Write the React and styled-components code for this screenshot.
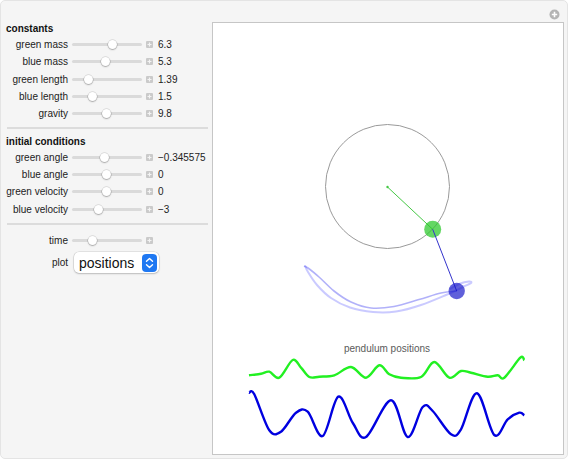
import styled, { createGlobalStyle } from "styled-components";

const GlobalStyle = createGlobalStyle`
  html, body {
    margin: 0;
    padding: 0;
    background: #ffffff;
  }
  body {
    font-family: "Liberation Sans", Arial, sans-serif;
  }
`;

const constants = [
  { label: "green mass", value: "6.3", pos: 40 },
  { label: "blue mass", value: "5.3", pos: 33 },
  { label: "green length", value: "1.39", pos: 16 },
  { label: "blue length", value: "1.5", pos: 20 },
  { label: "gravity", value: "9.8", pos: 34 },
];

const initial = [
  { label: "green angle", value: "\u22120.345575", pos: 32 },
  { label: "blue angle", value: "0", pos: 34 },
  { label: "green velocity", value: "0", pos: 34 },
  { label: "blue velocity", value: "\u22123", pos: 26 },
];

const greenWave = [
  [248, 374.3], [260, 372.7], [268.3, 370.7], [278.3, 376.7], [291.7, 359],
  [300, 366.7], [308.3, 376], [318.3, 375.7], [333.3, 374.3], [350, 366],
  [365, 376.7], [378.3, 364.3], [388.3, 373.3], [400, 376.7], [420, 376],
  [433.3, 361], [448.3, 376.7], [460, 370], [470, 371.7], [486.7, 375.7],
  [496.7, 374.3], [503.3, 376.7], [519.3, 356.7], [523.3, 359.3],
];

const blueWave = [
  [248, 391.7], [253.3, 393.3], [268.3, 429.3], [280, 430.7], [295, 411.7],
  [306.7, 410.7], [321.7, 435], [337.3, 395.7], [351.7, 421.7], [365, 436],
  [390, 399.3], [406.7, 436], [421.7, 406], [431.7, 410], [450, 433.3],
  [460, 428.3], [476, 392.3], [493.3, 434], [506.7, 418.3], [518.3, 411.7],
  [523.3, 414.3],
];

const fmt = (p) => `${p[0].toFixed(1)},${p[1].toFixed(1)}`;

const smooth = (pts) => {
  let d = `M${fmt(pts[0])}`;
  for (let i = 0; i < pts.length - 1; i++) {
    const p0 = pts[i - 1] || pts[i];
    const p1 = pts[i];
    const p2 = pts[i + 1];
    const p3 = pts[i + 2] || p2;
    const c1 = [p1[0] + (p2[0] - p0[0]) / 6, p1[1] + (p2[1] - p0[1]) / 6];
    const c2 = [p2[0] - (p3[0] - p1[0]) / 6, p2[1] - (p3[1] - p1[1]) / 6];
    d += ` C${fmt(c1)} ${fmt(c2)} ${fmt(p2)}`;
  }
  return d;
};

// trajectory of the blue bob (two passes of the loop)
const outerTrail = [
  [304, 264.5], [307, 271], [316, 284], [330, 297], [349, 306.5], [372, 311],
  [395, 310.5], [420, 304], [445, 294], [462, 286], [470, 282], [468, 280.5],
  [458, 283], [449, 288],
];
const innerTrail = [
  [303, 265], [307, 267], [318, 276], [333, 290], [350, 301], [370, 307],
  [393, 305.5], [418, 298.5], [440, 292], [456, 290],
];

const PlusBox = () => (
  <PlusWrap viewBox="0 0 7 7">
    <rect x="0" y="0" width="7" height="7" rx="1" fill="#cacaca" />
    <path d="M3.5 1.5v4M1.5 3.5h4" stroke="#f4f4f4" strokeWidth="1.2" />
  </PlusWrap>
);

const Slider = ({ pos }) => (
  <Track>
    <Thumb $pos={pos} />
  </Track>
);

const ControlRow = ({ label, value, pos }) => (
  <Row>
    <Label>{label}</Label>
    <Slider pos={pos} />
    <PlusBox />
    <Value>{value}</Value>
  </Row>
);

export default function App() {
  return (
    <>
      <GlobalStyle />
      <Panel>
        <Controls>
          <Heading>constants</Heading>
          {constants.map((c) => (
            <ControlRow key={c.label} {...c} />
          ))}
          <Divider />
          <Heading>initial conditions</Heading>
          {initial.map((c) => (
            <ControlRow key={c.label} {...c} />
          ))}
          <Divider />
          <Row $top={2}>
            <Label>time</Label>
            <Slider pos={20} />
            <PlusBox />
          </Row>
          <PlotRow>
            <Label>plot</Label>
            <Popup>
              <span>positions</span>
              <Stepper viewBox="0 0 15 18">
                <rect width="15" height="18" rx="4" fill="#1f78f2" />
                <path
                  d="M4.5 7.2L7.5 4.4L10.5 7.2M4.5 10.8L7.5 13.6L10.5 10.8"
                  fill="none"
                  stroke="#fff"
                  strokeWidth="1.4"
                  strokeLinecap="round"
                  strokeLinejoin="round"
                />
              </Stepper>
            </Popup>
          </PlotRow>
        </Controls>
        <Stage>
          <TopBar>
            <CornerIcon viewBox="0 0 11 11">
              <circle cx="5.5" cy="5.5" r="5" fill="#b4b4b4" />
              <path d="M5.5 2.8v5.4M2.8 5.5h5.4" stroke="#fff" strokeWidth="1.6" />
            </CornerIcon>
          </TopBar>
          <PlotBox>
            <svg width="350" height="431" viewBox="212 22 350 431">
              <circle cx="386.5" cy="185.5" r="62" fill="none" stroke="#9a9a9a" strokeWidth="1" />
              <path d={smooth(outerTrail)} fill="none" stroke="rgba(90,90,255,0.32)" strokeWidth="2" />
              <path d={smooth(innerTrail)} fill="none" stroke="rgba(70,70,240,0.42)" strokeWidth="1.6" />
              <line x1="386.5" y1="186" x2="431.7" y2="228.3" stroke="#45c845" strokeWidth="1" />
              <circle cx="386.5" cy="186" r="1.2" fill="#45c845" />
              <circle cx="431.7" cy="228.3" r="8.5" fill="rgba(40,200,40,0.72)" />
              <line x1="431.7" y1="228.3" x2="455.7" y2="290" stroke="#3434cc" strokeWidth="1" />
              <circle cx="455.7" cy="290" r="8.2" fill="rgba(20,20,200,0.68)" />
              <text
                x="386"
                y="350.5"
                textAnchor="middle"
                fontFamily="Liberation Sans, Arial, sans-serif"
                fontSize="10"
                fill="#5a5a5a"
              >
                pendulum positions
              </text>
              <path d={smooth(greenWave)} fill="none" stroke="#22f022" strokeWidth="2.4" />
              <path d={smooth(blueWave)} fill="none" stroke="#0000e0" strokeWidth="2.4" />
            </svg>
          </PlotBox>
        </Stage>
      </Panel>
    </>
  );
}

const Panel = styled.div`
  box-sizing: border-box;
  width: 568px;
  height: 459px;
  background: #f5f5f5;
  border: 1px solid #e4e4e4;
  border-radius: 5px;
  display: flex;
  align-items: flex-start;
`;

const Controls = styled.div`
  box-sizing: border-box;
  width: 211px;
  padding: 21px 4px 0 5px;
  display: flex;
  flex-direction: column;
`;

const Heading = styled.div`
  font-size: 10px;
  font-weight: bold;
  color: #111;
  height: 14px;
  line-height: 14px;
`;

const Row = styled.div`
  display: grid;
  grid-template-columns: 62px 70px 7px auto;
  column-gap: 4px;
  align-items: center;
  height: 17.25px;
  margin-top: ${({ $top }) => $top || 0}px;
`;

const Label = styled.span`
  font-size: 10px;
  color: #222;
  text-align: right;
  white-space: nowrap;
`;

const Value = styled.span`
  font-size: 10px;
  color: #222;
  margin-left: 1px;
  white-space: nowrap;
`;

const Track = styled.div`
  position: relative;
  height: 3px;
  border-radius: 2px;
  background: #dadada;
`;

const Thumb = styled.div`
  position: absolute;
  top: 50%;
  left: ${({ $pos }) => $pos}px;
  width: 9px;
  height: 9px;
  margin: -4.5px 0 0 -4.5px;
  border-radius: 50%;
  background: #ffffff;
  box-shadow: 0 0 0 0.5px rgba(0, 0, 0, 0.18), 0 1px 1.5px rgba(0, 0, 0, 0.25);
`;

const PlusWrap = styled.svg`
  width: 7px;
  height: 7px;
  display: block;
`;

const Divider = styled.div`
  height: 2px;
  background: #dcdcdc;
  margin: 5px 0 5.5px 1px;
`;

const PlotRow = styled.div`
  display: grid;
  grid-template-columns: 62px auto;
  column-gap: 6px;
  align-items: center;
  justify-content: start;
  margin-top: 2.5px;
`;

const Popup = styled.div`
  box-sizing: border-box;
  width: 85px;
  height: 21px;
  background: #ffffff;
  border-radius: 5px;
  box-shadow: 0 0 0 0.5px rgba(0, 0, 0, 0.14), 0 1px 2px rgba(0, 0, 0, 0.18);
  display: flex;
  align-items: center;
  justify-content: space-between;
  padding: 0 2px 0 5px;
  font-size: 14px;
  color: #111;
`;

const Stepper = styled.svg`
  width: 15px;
  height: 18px;
  display: block;
`;

const Stage = styled.div`
  display: flex;
  flex-direction: column;
`;

const TopBar = styled.div`
  height: 21px;
  display: flex;
  justify-content: flex-end;
  align-items: flex-start;
  padding-right: 4px;
`;

const CornerIcon = styled.svg`
  width: 11px;
  height: 11px;
  margin-top: 8px;
  display: block;
`;

const PlotBox = styled.div`
  width: 350px;
  height: 431px;
  background: #ffffff;
  border: 1px solid #c6c6c6;
  box-sizing: content-box;
  svg {
    display: block;
  }
`;
